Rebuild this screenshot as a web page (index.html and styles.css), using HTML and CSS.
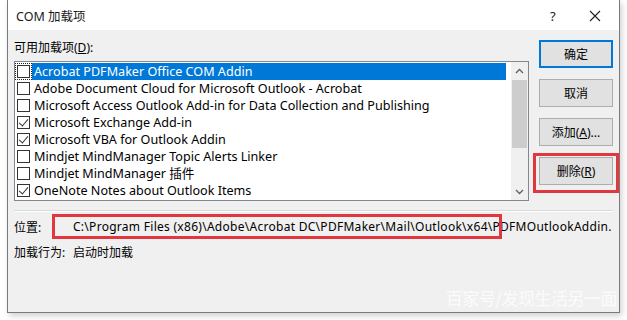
FILE: index.html
```html
<!DOCTYPE html>
<html lang="zh">
<head>
  <meta charset="UTF-8" />
  <title>COM 加载项</title>
  <link rel="stylesheet" href="styles.css">
</head>
<body>
  <div class="dialog">
    <div class="titlebar">
      <span class="title">COM 加载项</span>
      <span class="help">?</span>
      <span class="close">
        <svg width="12" height="12" viewBox="0 0 12 12"><path d="M1 1 L11 11 M11 1 L1 11" stroke="#222" stroke-width="1.1" fill="none"/></svg>
      </span>
    </div>

    <div class="panel">
      <div class="main">
        <div class="left">
          <div class="label">可用加载项(<u>D</u>):</div>
          <div class="listbox">
            <div class="items">
              <div class="item selected"><span class="check focus"></span><span class="name">Acrobat PDFMaker Office COM Addin</span></div>
              <div class="item"><span class="check"></span><span class="name">Adobe Document Cloud for Microsoft Outlook - Acrobat</span></div>
              <div class="item"><span class="check"></span><span class="name">Microsoft Access Outlook Add-in for Data Collection and Publishing</span></div>
              <div class="item"><span class="check on"></span><span class="name">Microsoft Exchange Add-in</span></div>
              <div class="item"><span class="check on"></span><span class="name">Microsoft VBA for Outlook Addin</span></div>
              <div class="item"><span class="check"></span><span class="name">Mindjet MindManager Topic Alerts Linker</span></div>
              <div class="item"><span class="check"></span><span class="name">Mindjet MindManager 插件</span></div>
              <div class="item"><span class="check on"></span><span class="name">OneNote Notes about Outlook Items</span></div>
            </div>
            <div class="scrollbar">
              <div class="arrow">
                <svg width="9" height="6" viewBox="0 0 9 6"><path d="M1 5 L4.5 1.5 L8 5" stroke="#606060" stroke-width="1.3" fill="none"/></svg>
              </div>
              <div class="track"><div class="thumb"></div></div>
              <div class="arrow">
                <svg width="9" height="6" viewBox="0 0 9 6"><path d="M1 1 L4.5 4.5 L8 1" stroke="#606060" stroke-width="1.3" fill="none"/></svg>
              </div>
            </div>
          </div>
        </div>

        <div class="buttons">
          <div class="btn default">确定</div>
          <div class="btn">取消</div>
          <div class="btn">添加(<u>A</u>)...</div>
          <div class="btn marked">删除(<u>R</u>)</div>
        </div>
      </div>

      <div class="separator"></div>

      <div class="info">
        <div class="row">
          <span class="key">位置:</span>
          <span class="value path">C:\Program Files (x86)\Adobe\Acrobat DC\PDFMaker\Mail\Outlook\x64\PDFMOutlookAddin.</span>
          <span class="path-mark"></span>
        </div>
        <div class="row">
          <span class="key">加载行为:</span>
          <span class="value">启动时加载</span>
        </div>
      </div>

      <div class="watermark">百家号/发现生活另一面</div>
    </div>
  </div>
</body>
</html>
```

FILE: styles.css
```css
* {
  margin: 0;
  padding: 0;
  box-sizing: border-box;
}
body {
  width: 627px;
  height: 320px;
  background: #ffffff;
  font-family: "Noto Sans", "Noto Sans CJK SC", sans-serif;
  font-size: 12px;
  color: #000;
  overflow: hidden;
}
u {
  text-decoration: underline;
  text-underline-offset: 1px;
}
.dialog {
  margin-left: 7px;
  width: 613px;
  height: 313px;
  border: 1px solid #7a7a7a;
  border-top: none;
  box-shadow: 2px 3px 6px rgba(0, 0, 0, 0.18);
  display: flex;
  flex-direction: column;
  background: #f0f0f0;
}
.titlebar {
  height: 30px;
  background: #ffffff;
  display: flex;
  align-items: center;
  padding-left: 8px;
  padding-top: 1px;
  font-size: 12.5px;
}
.title {
  flex: 1;
  color: #1a1a1a;
}
.help {
  width: 20px;
  font-size: 13px;
  color: #222;
  margin-right: 19px;
}
.close {
  width: 30px;
  display: flex;
  align-items: center;
}
.panel {
  flex: 1;
  position: relative;
  padding: 10px 6px 0 6px;
}
.main {
  display: flex;
  gap: 10px;
}
.left {
  width: 515px;
}
.label {
  height: 16px;
  line-height: 16px;
  margin-bottom: 5px;
}
.listbox {
  height: 140px;
  border: 1px solid #828790;
  background: #ffffff;
  display: flex;
}
.items {
  flex: 1;
  padding-top: 1px;
  padding-left: 2px;
}
.item {
  height: 17px;
  display: flex;
  align-items: center;
  white-space: nowrap;
  font-size: 12.6px;
}
.check {
  width: 13px;
  height: 13px;
  border: 1px solid #333333;
  background: #fff;
  margin-right: 2px;
  flex: none;
  position: relative;
}
.check.focus {
  outline: 1px dotted #222;
  outline-offset: 1px;
}
.check.on::after {
  content: "";
  position: absolute;
  left: 3px;
  top: 0px;
  width: 4px;
  height: 8px;
  border-right: 1px solid #333;
  border-bottom: 1px solid #333;
  transform: rotate(40deg);
}
.name {
  padding: 0 2px;
  height: 17px;
  line-height: 17px;
}
.item.selected .name {
  background: #0078d7;
  color: #ffffff;
  flex: 1;
  margin-right: 5px;
}
.scrollbar {
  width: 17px;
  background: #f0f0f0;
  display: flex;
  flex-direction: column;
}
.arrow {
  height: 17px;
  display: flex;
  align-items: center;
  justify-content: center;
}
.track {
  flex: 1;
}
.thumb {
  margin: 1px 1px 0 1px;
  height: 68px;
  background: #cdcdcd;
}
.buttons {
  width: 74px;
  display: flex;
  flex-direction: column;
  gap: 11px;
}
.btn {
  height: 28px;
  border: 1px solid #adadad;
  background: #e1e1e1;
  display: flex;
  align-items: center;
  justify-content: center;
  position: relative;
  font-size: 12px;
}
.btn.default {
  border: 2px solid #0078d7;
}
.btn.marked::after {
  content: "";
  position: absolute;
  left: -7px;
  right: -7px;
  top: -5px;
  bottom: -9px;
  border: 3px solid #e0383e;
}
.separator {
  margin-top: 9px;
  height: 2px;
  border-top: 1px solid #d9d9d9;
  border-bottom: 1px solid #ffffff;
}
.info {
  padding-top: 2px;
}
.row {
  height: 25px;
  display: flex;
  align-items: center;
  position: relative;
  white-space: nowrap;
}
.key {
  width: 59px;
}
.value.path {
  letter-spacing: 0.28px;
}
.path-mark {
  position: absolute;
  left: 38px;
  top: 0px;
  width: 450px;
  height: 25px;
  border: 3px solid #e0383e;
}
.watermark {
  position: absolute;
  right: 2px;
  bottom: 2px;
  font-family: "Noto Sans CJK SC", sans-serif;
  font-size: 17px;
  color: rgba(255, 255, 255, 0.8);
  letter-spacing: -0.5px;
}
```
